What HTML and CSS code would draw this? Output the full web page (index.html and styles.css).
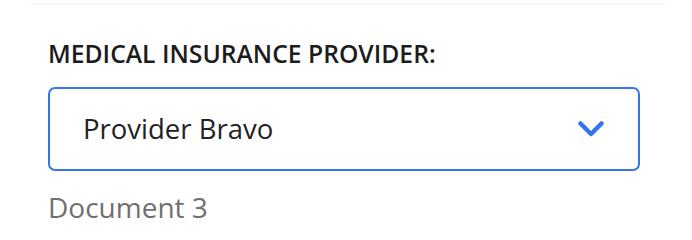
FILE: index.html
```html
<!DOCTYPE html>
<html>
<head>
<meta charset="utf-8">
<link rel="stylesheet" href="styles.css">
</head>
<body>
<div class="prev-card"></div>
<div class="field">
  <div class="field-label">MEDICAL INSURANCE PROVIDER:</div>
  <div class="select">
    <span class="select-value">Provider Bravo</span>
    <svg class="chevron" width="26" height="16" viewBox="0 0 26 16"><path d="M2.5 2.5 L13 13 L23.5 2.5" fill="none" stroke="#3474ec" stroke-width="4.5" stroke-linecap="round" stroke-linejoin="round"/></svg>
  </div>
  <div class="field-note">Document 3</div>
</div>
</body>
</html>
```
FILE: styles.css
```css
html, body {
  margin: 0;
  padding: 0;
  background: #ffffff;
}
body {
  width: 692px;
  height: 238px;
  overflow: hidden;
  font-family: "Open Sans", "Noto Sans", sans-serif;
}
.prev-card {
  height: 20px;
  margin: -17px 25px 0 25px;
  background: #fff;
  border-radius: 0 0 6px 6px;
  box-shadow: 0 1px 4px rgba(0, 0, 0, 0.06);
}
.field {
  display: flex;
  flex-direction: column;
  padding: 0 52px 0 48px;
}
.field-label {
  margin-top: 35px;
  font-size: 24.7px;
  line-height: 32px;
  font-weight: 600;
  color: #1c1c1c;
}
.select {
  margin-top: 17px;
  height: 80px;
  border: 2px solid #3474ec;
  border-radius: 7px;
  display: flex;
  align-items: center;
  justify-content: space-between;
  padding: 0 34px 0 33px;
}
.select-value {
  font-size: 27.5px;
  line-height: 36px;
  color: #222222;
}
.chevron {
  display: block;
}
.field-note {
  margin-top: 18px;
  font-size: 28px;
  line-height: 36px;
  color: #707070;
}
```
